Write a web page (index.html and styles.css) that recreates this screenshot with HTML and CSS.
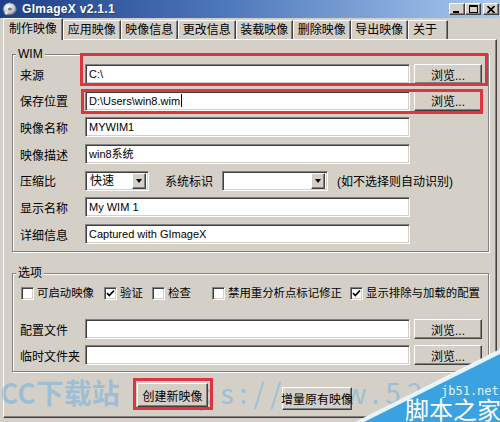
FILE: index.html
```html
<!DOCTYPE html>
<html lang="zh-CN">
<head>
    <meta charset="UTF-8">
    <title>GImageX v2.1.1</title>
    <link rel="stylesheet" href="styles.css">
</head>
<body>
<div class="window">

    <!-- Title bar -->
    <div class="titlebar">
        <svg class="app-icon" viewBox="0 0 16 16">
            <defs>
                <radialGradient id="disc" cx="0.4" cy="0.35" r="0.7">
                    <stop offset="0" stop-color="#ffffff"/>
                    <stop offset="0.6" stop-color="#c9ccd2"/>
                    <stop offset="1" stop-color="#7d8490"/>
                </radialGradient>
            </defs>
            <path d="M1 9 C1 4 5 1 9 2 C13 3 15 6 14 10 C12 14 6 15 3 13 Z" fill="url(#disc)" stroke="#5a6270" stroke-width="0.8"/>
            <ellipse cx="8" cy="8" rx="2.2" ry="1.6" fill="#6c7fa4"/>
            <path d="M2 12 L6 10 L5 14 Z" fill="#e8e8e8"/>
        </svg>
        <span class="title">GImageX v2.1.1</span>
        <div class="caption-buttons">
            <span class="cap-btn"><svg width="8" height="8" viewBox="0 0 8 8"><rect x="0" y="6" width="6" height="2" fill="#000"/></svg></span>
            <span class="cap-btn"><svg width="9" height="8" viewBox="0 0 9 8"><rect x="0.5" y="0.5" width="8" height="7" fill="none" stroke="#000"/><rect x="0" y="0" width="9" height="2" fill="#000"/></svg></span>
            <span class="cap-btn cap-close"><svg width="8" height="7" viewBox="0 0 8 7"><path d="M0.5 0 L7.5 7 M7.5 0 L0.5 7" stroke="#000" stroke-width="1.8"/></svg></span>
        </div>
    </div>

    <!-- Tabs -->
    <div class="tabs">
        <div class="tab active">制作映像</div>
        <div class="tab">应用映像</div>
        <div class="tab">映像信息</div>
        <div class="tab">更改信息</div>
        <div class="tab">装载映像</div>
        <div class="tab">删除映像</div>
        <div class="tab">导出映像</div>
        <div class="tab tab-short">关于</div>
    </div>

    <div class="panel">

        <!-- WIM group -->
        <div class="group">
            <div class="group-title">WIM</div>
            <div class="rows">
                <div class="row">
                    <label>来源</label>
                    <div class="field">C:\</div>
                    <div class="btn">浏览...</div>
                </div>
                <div class="row">
                    <label>保存位置</label>
                    <div class="field">D:\Users\win8.wim<span class="caret"></span></div>
                    <div class="btn">浏览...</div>
                </div>
                <div class="row">
                    <label>映像名称</label>
                    <div class="field">MYWIM1</div>
                </div>
                <div class="row">
                    <label>映像描述</label>
                    <div class="field">win8系统</div>
                </div>
                <div class="row">
                    <label>压缩比</label>
                    <div class="select select-small">
                        <span class="select-text">快速</span>
                        <span class="select-arrow"></span>
                    </div>
                    <span class="inline-label">系统标识</span>
                    <div class="select select-wide">
                        <span class="select-text"></span>
                        <span class="select-arrow"></span>
                    </div>
                    <span class="hint">(如不选择则自动识别)</span>
                </div>
                <div class="row">
                    <label>显示名称</label>
                    <div class="field">My WIM 1</div>
                </div>
                <div class="row">
                    <label>详细信息</label>
                    <div class="field">Captured with GImageX</div>
                </div>
            </div>
        </div>

        <!-- Options group -->
        <div class="group group-options">
            <div class="group-title">选项</div>
            <div class="checks">
                <div class="check"><span class="box"></span>可启动映像</div>
                <div class="check"><span class="box checked"><svg width="9" height="9" viewBox="0 0 9 9"><path d="M1 4 L3.3 6.5 L8 1.5" stroke="#000" stroke-width="1.7" fill="none"/></svg></span>验证</div>
                <div class="check"><span class="box"></span>检查</div>
                <div class="check"><span class="box"></span>禁用重分析点标记修正</div>
                <div class="check"><span class="box checked"><svg width="9" height="9" viewBox="0 0 9 9"><path d="M1 4 L3.3 6.5 L8 1.5" stroke="#000" stroke-width="1.7" fill="none"/></svg></span>显示排除与加载的配置</div>
            </div>
            <div class="rows rows-options">
                <div class="row">
                    <label>配置文件</label>
                    <div class="field"></div>
                    <div class="btn">浏览...</div>
                </div>
                <div class="row">
                    <label>临时文件夹</label>
                    <div class="field"></div>
                    <div class="btn">浏览...</div>
                </div>
            </div>
        </div>

        <!-- Actions -->
        <div class="actions">
            <div class="btn btn-create">创建新映像</div>
            <div class="btn btn-append">增量原有映像</div>
        </div>
    </div>

    <!-- Red highlight marks drawn over the screenshot -->
    <div class="mark mark-source"></div>
    <div class="mark mark-save"></div>
    <div class="mark mark-create"></div>

    <!-- Watermarks -->
    <div class="watermark"><span>CC下载站</span><span class="watermark-url">https://www.52sk</span></div>
    <svg class="jb51" viewBox="0 0 145 74" width="145" height="74">
        <polygon points="0,74 145,1 145,74" fill="#e8f4fb"/>
        <polygon points="9,74 145,6 145,74" fill="#3aa2e0"/>
        <text x="86" y="47" class="jb51-url">jb51.net</text>
        <text x="50" y="71" class="jb51-name">脚本之家</text>
    </svg>
</div>
</body>
</html>
```

FILE: styles.css
```css
/* General */
* {
    box-sizing: border-box;
}

body {
    margin: 0;
    width: 500px;
    height: 422px;
    overflow: hidden;
    background-color: #d4d0c8;
    font-family: "Liberation Sans", "Noto Sans CJK SC", sans-serif;
    font-size: 12px;
    color: #000;
}

.window {
    position: relative;
    height: 422px;
}

/* Title bar */
.titlebar {
    height: 18px;
    display: flex;
    align-items: center;
    padding-left: 2px;
    background: linear-gradient(90deg, #1d3f88 0%, #4d78ba 45%, #a9c9ef 100%);
}

.app-icon {
    width: 16px;
    height: 16px;
}

.title {
    margin-left: 4px;
    color: #fff;
    font-weight: bold;
    font-size: 12px;
    letter-spacing: 0.3px;
    text-shadow: 1px 1px 0 rgba(0, 0, 0, 0.3);
}

.caption-buttons {
    margin-left: auto;
    margin-right: 1px;
    display: flex;
}

.cap-btn {
    width: 16px;
    height: 12px;
    display: flex;
    align-items: center;
    justify-content: center;
    background-color: #d4d0c8;
    border: 1px solid;
    border-color: #fff #404040 #404040 #fff;
    box-shadow: inset -1px -1px #808080;
}

.cap-close {
    margin-left: 2px;
}

/* Tabs */
.tabs {
    height: 21px;
    display: flex;
    align-items: flex-end;
    padding-left: 3px;
}

.tab {
    width: 57.5px;
    height: 19px;
    line-height: 18px;
    text-align: center;
    border-top: 1px solid #fff;
    border-left: 1px solid #fff;
    border-right: 1px solid #404040;
    box-shadow: inset -1px 0 #808080;
    white-space: nowrap;
}

.tab.active {
    width: 60px;
    height: 22px;
    margin-bottom: -1px;
    line-height: 20px;
    background-color: #d4d0c8;
    position: relative;
    z-index: 1;
}

.tab-short {
    width: 40px;
    text-align: left;
    padding-left: 4px;
}

/* Tab page */
.panel {
    margin-left: 3px;
    width: 494px;
    height: 379px;
    padding: 14px 7px 0 8px;
    border: 1px solid;
    border-color: #fff #404040 #404040 #fff;
    box-shadow: inset -1px -1px #808080;
}

/* Group boxes */
.group {
    border: 1px solid #808080;
    box-shadow: inset 1px 1px #fff, 1px 1px #fff;
    padding: 0 0 7px 7px;
}

.group-title {
    width: fit-content;
    margin: -8px 0 0 -4px;
    padding: 0 2px;
    line-height: 14px;
    background-color: #d4d0c8;
}

.group-options {
    margin-top: 21px;
    padding-bottom: 6px;
}

.rows {
    display: flex;
    flex-direction: column;
    gap: 6.7px;
    margin-top: 3px;
}

.rows-options {
    margin-top: 19px;
    gap: 6px;
}

.row {
    height: 20px;
    display: flex;
    align-items: center;
}

.row label {
    width: 65px;
    white-space: nowrap;
}

/* Sunken inputs */
.field,
.select {
    height: 20px;
    background-color: #fff;
    border: 1px solid;
    border-color: #808080 #fff #fff #808080;
    box-shadow: inset 1px 1px #404040, inset -1px -1px #d4d0c8;
}

.field {
    width: 325px;
    padding: 0 3px;
    line-height: 18px;
    font-size: 11px;
    white-space: nowrap;
    overflow: hidden;
}

.caret {
    display: inline-block;
    width: 1px;
    height: 13px;
    margin-left: 1px;
    vertical-align: -2px;
    background-color: #000;
}

.select {
    display: flex;
    align-items: center;
    padding: 2px;
}

.select-small {
    width: 64px;
}

.select-wide {
    width: 106px;
}

.select-text {
    flex: 1;
    padding-left: 2px;
    line-height: 16px;
}

.select-arrow {
    width: 14px;
    height: 16px;
    display: flex;
    align-items: center;
    justify-content: center;
    background-color: #d4d0c8;
    border: 1px solid;
    border-color: #fff #404040 #404040 #fff;
    box-shadow: inset -1px -1px #808080;
}

.select-arrow::after {
    content: "";
    border-left: 3.5px solid transparent;
    border-right: 3.5px solid transparent;
    border-top: 4px solid #000;
}

.inline-label {
    margin-left: 16px;
    width: 57px;
}

.hint {
    margin-left: 9px;
    white-space: nowrap;
}

/* Raised buttons */
.btn {
    height: 20px;
    width: 68px;
    margin-left: 4px;
    display: flex;
    align-items: center;
    justify-content: center;
    background-color: #d4d0c8;
    border: 1px solid;
    border-color: #fff #404040 #404040 #fff;
    box-shadow: inset -1px -1px #808080;
    white-space: nowrap;
}

/* Checkboxes */
.checks {
    display: grid;
    grid-template-columns: 83px 48px 60px 138px auto;
    margin: 7px 0 0 1px;
    height: 13px;
    font-size: 11.4px;
}

.check {
    display: flex;
    align-items: center;
    gap: 3px;
    line-height: 13px;
    white-space: nowrap;
}

.box {
    width: 13px;
    height: 13px;
    display: flex;
    align-items: center;
    justify-content: center;
    background-color: #fff;
    border: 1px solid;
    border-color: #808080 #fff #fff #808080;
    box-shadow: inset 1px 1px #404040, inset -1px -1px #d4d0c8;
}

/* Bottom buttons */
.actions {
    display: flex;
    align-items: flex-start;
    gap: 74px;
    margin: 11px 0 0 125px;
    position: relative;
    z-index: 2;
}

.actions .btn {
    margin-left: 0;
}

.btn-create {
    width: 71px;
    height: 24px;
}

.btn-append {
    width: 70px;
    height: 23px;
    margin-top: 4px;
}

/* Red highlight marks */
.mark {
    position: absolute;
    border: 3px solid #dc3540;
    z-index: 3;
}

.mark-source {
    left: 80px;
    top: 53px;
    width: 408px;
    height: 33px;
}

.mark-save {
    left: 81px;
    top: 89px;
    width: 402px;
    height: 25px;
}

.mark-create {
    left: 133px;
    top: 378px;
    width: 80px;
    height: 32px;
}

/* Watermarks */
.watermark {
    position: absolute;
    left: 0;
    top: 377px;
    z-index: 1;
    font-family: "Noto Sans CJK SC", sans-serif;
    font-size: 28px;
    font-weight: bold;
    line-height: 30px;
    color: rgba(70, 160, 230, 0.4);
    white-space: nowrap;
}

.watermark-url {
    margin-left: 22px;
    font-weight: normal;
    letter-spacing: 6px;
}

.jb51 {
    position: absolute;
    left: 355px;
    top: 348px;
    z-index: 4;
}

.jb51-url {
    font-family: "DejaVu Sans Mono", monospace;
    font-size: 12px;
    fill: #e4f2fb;
}

.jb51-name {
    font-family: "Noto Sans CJK SC", sans-serif;
    font-size: 24px;
    fill: #fff;
}
```
